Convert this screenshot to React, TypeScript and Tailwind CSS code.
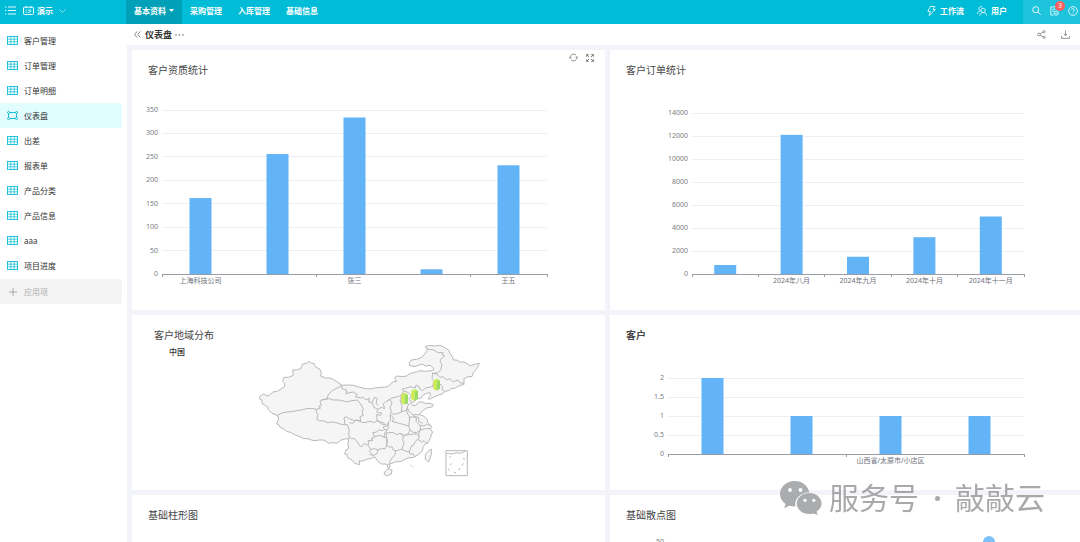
import React, { useState } from 'react';

type BarChartProps = {
  title: string;
  height: number;
  left: number;
  right: number;
  top: number;
  bottom: number;
  ticks: number[];
  values: number[];
  labels: string[];
  marks: number[];
};

const menuItems = [
  '客户管理',
  '订单管理',
  '订单明细',
  '仪表盘',
  '出差',
  '报表单',
  '产品分类',
  '产品信息',
  'aaa',
  '项目进度',
];

const tabs = ['基本资料', '采购管理', '入库管理', '基础信息'];

const TableIcon = () => (
  <svg className="w-[11px] h-[9px] shrink-0 text-[#1fc3da]" viewBox="0 0 11 9" fill="none" stroke="currentColor">
    <rect x="0.5" y="0.5" width="10" height="8" />
    <path d="M0.5 3.2h10M0.5 5.8h10M3.8 0.5v8M7.2 0.5v8" strokeWidth="0.8" />
  </svg>
);

const BoardIcon = () => (
  <svg className="w-[11px] h-[9px] shrink-0 text-[#12bdd5]" viewBox="0 0 11 9" fill="none" stroke="currentColor">
    <path d="M2.5 1.5h6M2.5 7.5h6M1.5 2.5v4M9.5 2.5v4" />
    <circle cx="1.5" cy="1.5" r="1" />
    <circle cx="9.5" cy="1.5" r="1" />
    <circle cx="1.5" cy="7.5" r="1" />
    <circle cx="9.5" cy="7.5" r="1" />
  </svg>
);

const Header = () => {
  const [active, setActive] = useState(tabs[0]);

  return (
    <header className="flex h-6 shrink-0 bg-[#00bcd7] text-white text-[8px] leading-[22px] font-bold">
      <div className="w-[126px] flex items-center pl-[5px] pb-[3px]">
        <button aria-label="菜单">
          <svg className="w-[11px] h-[9px]" viewBox="0 0 11 9" stroke="currentColor" strokeWidth="0.9">
            <path d="M0 1h1.4M3 1h8M0 4.5h1.4M3 4.5h8M0 8h1.4M3 8h8" />
          </svg>
        </button>
        <button className="flex items-center ml-[7px]">
          <svg className="w-[11px] h-[9px]" viewBox="0 0 11 9" fill="none" stroke="currentColor" strokeWidth="0.9">
            <rect x="0.5" y="1.2" width="10" height="7.3" rx="0.8" />
            <path d="M3 0v2.2M8 0v2.2M2.5 4.2h1.2M5 4.2h3.2M2.5 6.2h1.2M4.6 5.8l1 1 2.6-1.6" />
          </svg>
          <span className="ml-[3px]">演示</span>
          <svg className="w-[7px] h-[4px] ml-[6px] opacity-80" viewBox="0 0 7 4" fill="none" stroke="currentColor" strokeWidth="0.7">
            <path d="M0.4 0.4l3.1 3 3.1-3" />
          </svg>
        </button>
      </div>
      <nav className="flex">
        {tabs.map((tab) => (
          <button
            key={tab}
            onClick={() => setActive(tab)}
            className={`flex items-center px-2 pb-[3px] ${active === tab ? 'bg-[#00a1b8]' : ''}`}
          >
            {tab}
            {tab === '基本资料' && (
              <svg className="w-[5px] h-[3px] ml-[3px]" viewBox="0 0 5 3" fill="currentColor">
                <path d="M0 0h5L2.5 3z" />
              </svg>
            )}
          </button>
        ))}
      </nav>
      <div className="ml-auto flex items-center">
        <button className="flex items-center pb-[3px]">
          <svg className="w-[9px] h-[10px]" viewBox="0 0 9 10" fill="none" stroke="currentColor" strokeWidth="0.8" strokeLinejoin="round">
            <path d="M3.2 0.5h4.6L6 3.6h2.4L2 9.5l1.4-4H0.8z" />
          </svg>
          <span className="ml-1">工作流</span>
        </button>
        <button className="flex items-center ml-[13px] mr-4 pb-[3px]">
          <svg className="w-[10px] h-[10px]" viewBox="0 0 10 10" fill="none" stroke="currentColor" strokeWidth="0.8">
            <circle cx="6.2" cy="4.4" r="2.1" />
            <path d="M2.8 9.6c0-2 1.4-3 3.4-3s3.4 1 3.4 3M4 4.8a2.1 2.1 0 1 1 1.4-3.6M0.5 8c0-1.6 0.8-2.6 2.4-3" />
          </svg>
          <span className="ml-1">用户</span>
        </button>
        <div className="h-full w-[57px] flex items-center justify-end gap-[9px] pr-[2px] pb-[3px] bg-[#1dc4db]">
          <button aria-label="搜索">
            <svg className="w-[9px] h-[9px]" viewBox="0 0 9 9" fill="none" stroke="currentColor" strokeWidth="0.9">
              <circle cx="3.7" cy="3.7" r="3" />
              <path d="M6 6l2.7 2.7" />
            </svg>
          </button>
          <button aria-label="待办" className="relative">
            <svg className="w-[9px] h-[10px]" viewBox="0 0 9 10" fill="none" stroke="currentColor" strokeWidth="0.8">
              <path d="M7.6 3.6V0.9H0.8v8.2h2.8M2.4 3.2h3M2.4 5.2h1.4" />
              <circle cx="6.2" cy="7.1" r="2.1" />
              <path d="M5.3 7.1l0.7 0.7 1.2-1.3" />
            </svg>
            <span className="absolute -top-[5px] left-[5px] w-[10px] h-[10px] rounded-full bg-[#fa5f5f] text-[7px] leading-[10px] font-normal text-center">
              3
            </span>
          </button>
          <button aria-label="帮助">
            <svg className="w-[10px] h-[10px]" viewBox="0 0 10 10" fill="none" stroke="currentColor" strokeWidth="0.8">
              <circle cx="5" cy="5" r="4.4" />
              <path d="M3.6 4a1.4 1.4 0 1 1 2.1 1.2c-0.5 0.3-0.7 0.5-0.7 1M5 7v0.8" />
            </svg>
          </button>
        </div>
      </div>
    </header>
  );
};

const Sidebar = () => {
  const [current, setCurrent] = useState('仪表盘');

  return (
    <aside className="w-[127px] shrink-0 bg-white pt-1 pr-[5px] text-[8px] text-[#333]">
      <nav>
        {menuItems.map((item) => (
          <a
            key={item}
            href="#"
            onClick={() => setCurrent(item)}
            className={`flex items-center gap-[6px] h-[25px] pl-[7px] rounded-r-xs ${current === item ? 'bg-[#e1fdfe]' : ''}`}
          >
            {item === '仪表盘' ? <BoardIcon /> : <TableIcon />}
            <span>{item}</span>
          </a>
        ))}
      </nav>
      <button className="mt-px w-full h-[25px] pl-[9px] flex items-center gap-[7px] rounded-r-xs bg-[#f4f4f4] text-[#b0b0b0]">
        <svg className="w-2 h-2" viewBox="0 0 8 8" stroke="#999" strokeWidth="0.8">
          <path d="M0 4h8M4 0v8" />
        </svg>
        应用项
      </button>
    </aside>
  );
};

const Toolbar = () => (
  <div className="flex items-center h-[21px] pl-[7px] pr-[10px] bg-white text-[#8a8a8a]">
    <button aria-label="收起">
      <svg className="w-[7px] h-[7px]" viewBox="0 0 7 7" fill="none" stroke="#666" strokeWidth="0.8">
        <path d="M3.2 0.4L0.6 3.5l2.6 3.1M6.4 0.4L3.8 3.5l2.6 3.1" />
      </svg>
    </button>
    <h1 className="ml-1 text-[9px] font-bold text-[#333]">仪表盘</h1>
    <button aria-label="更多" className="ml-[3px]">
      <svg className="w-[9px] h-[2px]" viewBox="0 0 9 2" fill="#555">
        <circle cx="1" cy="1" r="0.7" />
        <circle cx="4.5" cy="1" r="0.7" />
        <circle cx="8" cy="1" r="0.7" />
      </svg>
    </button>
    <div className="ml-auto flex items-center gap-[15px]">
      <button aria-label="分享">
        <svg className="w-[9px] h-[9px]" viewBox="0 0 9 9" fill="none" stroke="currentColor" strokeWidth="0.9">
          <circle cx="1.9" cy="4.5" r="1.4" />
          <circle cx="7.1" cy="1.7" r="1.1" />
          <circle cx="7.1" cy="7.3" r="1.1" />
          <path d="M3.1 3.8l3-1.6M3.1 5.2l3 1.6" />
        </svg>
      </button>
      <button aria-label="下载">
        <svg className="w-[9px] h-[9px]" viewBox="0 0 9 9" fill="none" stroke="currentColor" strokeWidth="0.9">
          <path d="M0.6 6v2.4h7.8V6M4.5 0.5v5M2.9 4l1.6 1.7L6.1 4" />
        </svg>
      </button>
    </div>
  </div>
);

const Card = ({ title, titleClass = '', children, actions }: {
  title: string;
  titleClass?: string;
  children?: React.ReactNode;
  actions?: React.ReactNode;
}) => (
  <section className="relative bg-white pt-[10px]">
    <h2 className={`pl-4 h-5 leading-5 text-[10px] text-[#464646] ${titleClass}`}>{title}</h2>
    {actions}
    {children}
  </section>
);

const BarChart = ({ title, height, left, right, top, bottom, ticks, values, labels, marks }: BarChartProps) => {
  const max = ticks[ticks.length - 1];
  const band = (right - left) / values.length;
  const y = (v: number) => bottom - (v / max) * (bottom - top);

  return (
    <svg className="block w-full" viewBox={`0 0 473 ${height}`} role="img" aria-label={title}>
      {ticks.map((t) => (
        <g key={t}>
          {t > 0 && <path d={`M${left} ${Math.floor(y(t)) + 0.5}H${right}`} stroke="#eceff6" />}
          <text x={left - 4} y={y(t) + 2} textAnchor="end" className="text-[7px]" fill="#7a7d85">
            {t}
          </text>
        </g>
      ))}
      {values.map((v, i) => (
        <rect key={i} x={left + band * (i + 0.5) - 11} y={y(v)} width="22" height={bottom - y(v)} fill="#63b3f7" />
      ))}
      <path d={`M${left} ${bottom + 0.5}H${right}`} stroke="#9a9ca5" />
      {marks.map((m) => (
        <path key={m} d={`M${Math.floor(left + band * m) + 0.5} ${bottom}v3`} stroke="#9a9ca5" />
      ))}
      {labels.map((label, i) => (
        <text key={i} x={left + band * (i + 0.5)} y={bottom + 9} textAnchor="middle" className="text-[7px]" fill="#6e7079">
          {label}
        </text>
      ))}
    </svg>
  );
};

const provinceLines = [
  'M112 286L126 279 140 276 156 275 170 272 184 270 200 266 216 265 230 268 242 264 236 260 244 256 240 244 246 240 262 236 264 226 274 214 288 206 300 200 304 194',
  'M230 268L228 276 234 284 230 298 240 303 250 302 262 308 276 306 288 308 300 312 314 314 314 304 312 294 318 290 328 296 338 300 346 302 352 300 362 304 360 290 370 286 366 278 370 266 362 252 352 240 336 242 320 246 308 242 296 240 280 240 268 236 244 240',
  'M314 314L322 314 328 330 326 342 328 350 326 358',
  'M304 196L306 206 320 210 318 222 328 218 340 216 352 224 346 230 362 234 370 232 378 240 388 234 386 246 396 248 404 232 412 236 408 250 416 256',
  'M396 248L402 262 414 268 424 262 434 266 430 252 434 248 440 244 450 238',
  'M414 268L410 276 426 280 422 286 410 284 412 304',
  'M450 238L456 250 450 262 454 274 450 288 452 300 446 306 440 318 430 308 412 304',
  'M440 244L456 234 474 230 486 224 490 214 488 206 494 206 510 200 526 204 528 196 536 198 540 208 548 212 556 204 578 200 580 188 586 186 576 176 578 160 590 162 586 156',
  'M486 224L480 240 486 256 484 276 470 282 456 282',
  'M490 212L506 218 514 228 508 238 514 246M498 248L506 252 502 262 500 270 484 276',
  'M502 262L506 274 518 284 538 284M500 270L502 280 510 292 506 318 492 314 478 310 462 306 456 304 462 298 454 286',
  'M446 306L444 326 434 340 446 338 460 338 470 344 480 340 494 346 504 342 510 330 506 318',
  'M328 308L338 310 348 300 358 304 372 308 390 304 404 308 412 300 424 312 436 314',
  'M440 318L430 320 432 328 442 330M430 332L416 330 410 336 398 338 404 350 420 346 432 352 434 340',
  'M404 350L394 356 398 362 384 362 386 370 384 376 372 370 366 380 360 378 352 366 344 356 334 356 328 350',
  'M384 376L392 388 388 394 400 406 388 404M404 350L396 358 390 364M432 352L440 352 440 376 436 386 424 386 414 390 404 386 392 388',
  'M400 406L410 402 414 390M440 376L450 382 456 380 460 390 468 392 464 406 456 414 450 424 448 434',
  'M440 342L438 350 442 360 440 376M468 392L476 390 486 388 492 370 488 360 490 350 480 340',
  'M490 350L500 344 510 344 520 342 530 342 538 350 534 358 526 364 520 376 514 378 508 396 498 394 486 388',
  'M508 396L510 402 520 402 524 410M534 358L544 366 552 362 558 368 564 370',
  'M538 350L536 340 542 330 556 326 570 326M542 330L540 316 528 304 530 294 516 290 506 294M540 330L530 338 518 336 510 330',
  'M540 316L552 318 560 312 570 318M518 284L524 290 536 292 536 304 548 310',
  'M590 162L602 150 606 134 600 124 604 116 614 108 606 104 610 98 594 98 582 90 568 88 560 86',
  'M576 160L588 160 600 172 610 170 620 180 630 176 640 186 654 180 660 188 672 190',
  'M578 200L588 196 600 192 608 200 606 208 614 214',
];

const markers = [
  [494, 236],
  [524, 225],
  [590, 194],
];

const ChinaMap = () => (
  <svg className="block w-full" viewBox="0 0 473 145" role="img" aria-label="客户地域分布">
    <text x="37" y="10" className="text-[8px] font-medium" fill="#333">中国</text>
    <g transform="translate(108 -25) scale(0.3333)" fill="#f5f5f5" stroke="#b8b8b8" strokeWidth="3" strokeLinejoin="round">
      <path d="M58 230L64 226 72 222 80 228 88 226 98 216 112 214 124 206 134 200 134 190 128 184 132 172 146 172 160 166 158 150 170 150 182 146 188 132 200 130 206 124 214 130 222 130 226 140 240 148 244 160 242 168 256 174 270 174 280 178 288 184 302 192 304 196 322 195 340 196 360 202 376 206 390 207 404 204 420 202 434 202 446 198 458 186 470 184 464 174 470 168 488 170 500 168 508 162 520 158 530 156 540 152 556 154 576 152 582 148 578 142 570 136 556 138 546 132 536 136 522 140 508 136 508 128 514 120 530 118 546 112 554 102 562 92 560 86 556 80 568 76 584 78 600 76 616 84 628 92 630 100 636 108 640 120 650 120 660 126 672 126 684 132 690 138 706 132 718 130 712 142 706 152 700 158 696 170 684 170 672 176 672 194 660 196 646 204 634 206 626 212 616 214 606 222 594 226 584 230 568 238 564 236 572 226 570 218 560 220 548 226 544 234 530 236 524 244 510 250 516 256 528 256 536 246 546 246 556 250 570 250 580 254 578 260 560 264 548 272 538 284 550 288 562 298 562 306 568 312 576 322 570 326 578 336 574 344 572 352 564 368 556 372 550 380 546 394 534 404 522 412 504 414 494 418 484 424 466 426 456 430 446 434 452 440 444 444 442 434 436 432 424 432 412 422 404 410 392 416 380 418 366 424 358 422 358 434 344 430 338 422 322 412 322 404 314 402 318 390 326 386 324 372 326 358 318 356 304 360 290 370 278 368 266 370 258 364 250 360 238 360 222 362 214 360 204 356 190 356 180 350 168 346 154 338 140 334 130 326 120 322 116 314 110 312 116 296 112 286 96 280 84 268 84 262 66 250 66 240 60 238Z" />
      <path d={provinceLines.join('')} fill="none" />
      <path d="M434 456L444 446 456 450 454 462 440 468 432 462Z" />
      <path d="M568 390L574 388 574 404 566 426 556 418 556 404Z" />
      <path d="M511 437h4M518 441h3" />
      <rect x="618" y="392" width="64" height="75" fill="#fff" />
      <path d="M620 400L636 402 648 398 662 400 676 394M630 408v5M634 430l-3 5M626 446l2 6M642 458h6M656 450l4-6M667 436l3-6M672 420v-6" fill="none" />
    </g>
    <g transform="translate(108 -25) scale(0.3333)">
      {markers.map(([x, y]) => (
        <g key={x} transform={`translate(${x} ${y})`}>
          <path d="M0 -18L-10 -12V12L0 18Z" fill="#cdec4c" />
          <path d="M0 -18L10 -12V12L0 18Z" fill="#9bdc60" />
          <path d="M0 -18L8 -13 0 -9Z" fill="#cdec4c" />
        </g>
      ))}
    </g>
  </svg>
);

const CardActions = () => (
  <div className="absolute top-[3px] right-[11px] flex gap-2">
    <button aria-label="刷新">
      <svg className="w-[9px] h-[9px]" viewBox="0 0 9 9" fill="none" stroke="#777" strokeWidth="0.8">
        <path d="M1.1 5.2A3.5 3.5 0 0 1 7 2.1M7.9 3.8A3.5 3.5 0 0 1 2 6.9" />
        <path d="M0 4.2l1.1 1.2 1.2-1.2M6.7 4.8l1.2-1.2L9 4.8" />
      </svg>
    </button>
    <button aria-label="全屏">
      <svg className="w-[8px] h-[8px]" viewBox="0 0 8 8" fill="none" stroke="#777" strokeWidth="0.9">
        <path d="M0.6 2.8V0.6h2.2M0.6 0.6l2.4 2.4M5.2 0.6h2.2v2.2M7.4 0.6L5 3M0.6 5.2v2.2h2.2M0.6 7.4L3 5M7.4 5.2v2.2H5.2M7.4 7.4L5 5" />
      </svg>
    </button>
  </div>
);

const Watermark = () => (
  <div className="fixed right-[35px] bottom-[22px] flex items-center text-[30px] leading-[44px] text-[#8c8c8c]/75 pointer-events-none">
    <svg className="w-[42px] h-[34px] mr-[7px]" viewBox="0 0 42 34">
      <path
        d="M15 0C6.700 0 0 5.800 0 13c0 4 2.100 7.500 5.500 9.900L4.200 27.300l5-2.500c1.800.5 3.800.9 6.200.8C14 17.500 21 11 29.300 11.200 28 4.800 22 0 15 0Z"
        fill="#aaacae"
      />
      <path
        d="M29.300 12C22.300 12 16.700 16.700 16.700 22.500S22.300 33 29.300 33c1.500 0 3-.2 4.300-.6L37.600 34l-1-3.500c3-1.900 5-4.800 5-8C41.600 16.700 36.200 12 29.300 12Z"
        fill="#aaacae"
      />
      <g fill="#fff">
        <circle cx="10" cy="9" r="1.900" />
        <circle cx="20.500" cy="9" r="1.900" />
        <circle cx="25" cy="19.300" r="1.600" />
        <circle cx="33.800" cy="19.300" r="1.600" />
      </g>
    </svg>
    <span>服务号</span>
    <span className="w-[36px] flex justify-center">
      <span className="w-[5px] h-[5px] rounded-full bg-[#8c8c8c]/75" />
    </span>
    <span>敲敲云</span>
  </div>
);

const App = () => {
  return (
    <div className="h-screen flex flex-col overflow-hidden bg-[#f3f4f9] font-['Noto_Sans','Noto_Sans_CJK_SC',sans-serif]">
      <Header />
      <div className="flex flex-1 min-h-0">
        <Sidebar />
        <main className="flex-1 min-w-0 overflow-hidden">
          <Toolbar />
          <div className="grid grid-cols-2 gap-[5px] pt-[5px] pl-[5px] -mr-[3px]">
            <Card title="客户资质统计" actions={<CardActions />}>
              <BarChart
                title="客户资质统计"
                height={230}
                left={30}
                right={415}
                top={30}
                bottom={194}
                ticks={[0, 50, 100, 150, 200, 250, 300, 350]}
                values={[162, 256, 334, 10, 232]}
                labels={['上海科技公司', '', '张三', '', '王五']}
                marks={[0, 2, 4, 5]}
              />
            </Card>
            <Card title="客户订单统计">
              <BarChart
                title="客户订单统计"
                height={230}
                left={82}
                right={414}
                top={33}
                bottom={194}
                ticks={[0, 2000, 4000, 6000, 8000, 10000, 12000, 14000]}
                values={[780, 12100, 1500, 3200, 5000]}
                labels={['', '2024年八月', '2024年九月', '2024年十月', '2024年十一月']}
                marks={[0, 1, 2, 3, 4, 5]}
              />
            </Card>
            <Card title="客户地域分布" titleClass="ml-[6px]">
              <ChinaMap />
            </Card>
            <Card title="客户" titleClass="font-bold">
              <BarChart
                title="客户"
                height={145}
                left={58}
                right={414}
                top={33}
                bottom={109}
                ticks={[0, 0.5, 1, 1.5, 2]}
                values={[2, 1, 1, 1]}
                labels={['', '', '山西省/太原市/小店区', '']}
                marks={[0, 2, 4]}
              />
            </Card>
            <Card title="基础柱形图" />
            <Card title="基础散点图">
              <svg className="block w-full" viewBox="0 0 473 145" role="img" aria-label="基础散点图">
                <text x="54" y="19" textAnchor="end" className="text-[7px]" fill="#7a7d85">50</text>
                <circle cx="379" cy="17" r="6" fill="#7dbff8" />
              </svg>
            </Card>
          </div>
        </main>
      </div>
      <Watermark />
    </div>
  );
};

export default App;
